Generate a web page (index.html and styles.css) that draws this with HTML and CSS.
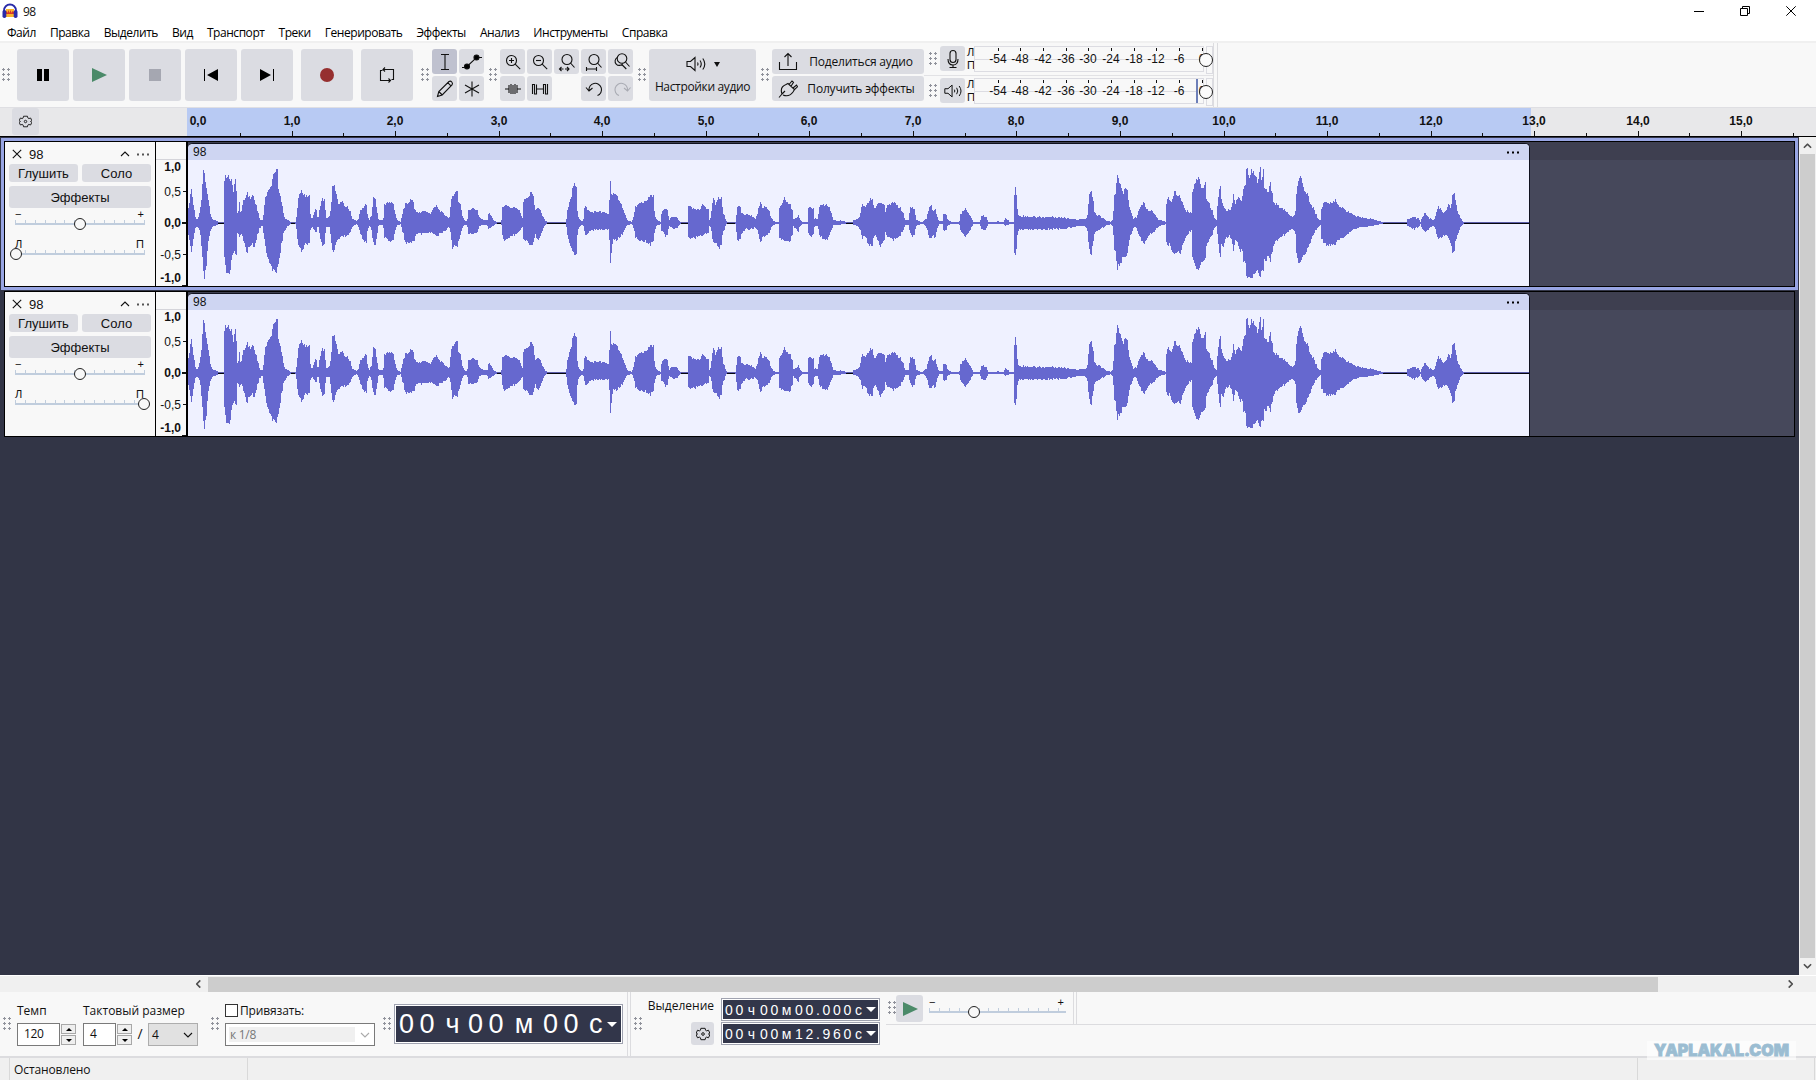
FILE: index.html
```html
<!DOCTYPE html>
<html lang="ru">
<head>
  <meta charset="UTF-8">
  <meta name="viewport" content="width=device-width, initial-scale=1.0">
  <title>98</title>
  <link rel="stylesheet" href="styles.css">
</head>
<body>
  <!-- Shared icons -->
  <svg class="sprite" aria-hidden="true">
    <symbol id="i-gear" viewBox="0 0 16 16"><path d="M5.600 1.500h4.800l.6 2.300 1.100.6 2.200-.7L15.800 7l-1.600 1 1.600 1-1.500 3.300-2.200-.7-1.100.6-.6 2.300H5.600L5 12.200l-1.100-.6-2.200.7L.2 9l1.600-1-1.600-1 1.500-3.300 2.200.7L5 3.800z"/><circle cx="8" cy="8" r="1.500"/></symbol>
    <symbol id="i-lens" viewBox="0 0 20 20"><circle cx="8.500" cy="8.500" r="5"/><path d="M12.200 12.200l5 5"/></symbol>
    <symbol id="i-speaker" viewBox="0 0 22 18"><path d="M2 6.500h3.500L10 2.500v13l-4.500-4H2zM12.500 7.500q1 1.500 0 3M15 5.500q2.500 3.500 0 7M17.800 3.500q4 5.500 0 11"/></symbol>
    <symbol id="i-close" viewBox="0 0 10 10"><path d="M.8.8l8.400 8.400M9.200.8L.8 9.200"/></symbol>
    <symbol id="i-up" viewBox="0 0 10 6"><path d="M1 5l4-4 4 4"/></symbol>
    <symbol id="i-dots" viewBox="0 0 14 3"><path d="M1 .5h2v2H1zM6 .5h2v2H6zM11 .5h2v2h-2z"/></symbol>
  </svg>

  <div class="app">
    <header class="titlebar">
      <svg class="logo" viewBox="0 0 16 16">
        <path d="M4 6h8v8H4z" fill="#f9b52a"/><path d="M3.500 9l1-1 1 2 1-3 1 3 1-3 1 3 1-2 1.500 1v2h-8.500z" fill="#d8352a"/>
        <path d="M2 9V7.500a6 6 0 0 1 12 0V9" fill="none" stroke="#2a2ba8" stroke-width="1.800"/>
        <rect x="0.500" y="7" width="3.800" height="8" rx="1.800" fill="#2a2ba8"/><rect x="11.700" y="7" width="3.800" height="8" rx="1.800" fill="#2a2ba8"/>
      </svg>
      <span class="title">98</span>
      <div class="window-buttons">
        <svg viewBox="0 0 10 10"><path d="M0 5.500h10"/></svg>
        <svg viewBox="0 0 10 10"><path d="M.5 2.500h7v7h-7zM2.500 2.500v-2h7v7h-2"/></svg>
        <svg viewBox="0 0 10 10"><path d="M.3.3l9.400 9.400M9.700.3L.3 9.700"/></svg>
      </div>
    </header>

    <nav class="menu">
      <span>Файл</span><span>Правка</span><span>Выделить</span><span>Вид</span><span>Транспорт</span><span>Треки</span><span>Генерировать</span><span>Эффекты</span><span>Анализ</span><span>Инструменты</span><span>Справка</span>
    </nav>

    <!-- Top toolbars -->
    <div class="toolbar">
      <i class="grip"></i>
      <div class="transport">
        <button><svg viewBox="0 0 16 16"><path d="M2 2h5v12H2zM9 2h5v12H9z"/></svg></button>
        <button><svg viewBox="0 0 16 16"><path d="M1 1l15 7-15 7z" fill="#4b8a69"/></svg></button>
        <button><svg viewBox="0 0 16 16"><path d="M2 2h12v12H2z" fill="#a5a7b1"/></svg></button>
        <button><svg viewBox="0 0 16 16"><path d="M1 2h1v12H1zM15 2v12L4 8z"/></svg></button>
        <button><svg viewBox="0 0 16 16"><path d="M14 2h1v12h-1zM1 2v12l11-6z"/></svg></button>
        <button class="apart"><svg viewBox="0 0 16 16"><circle cx="8" cy="8" r="7" fill="#962f2f"/></svg></button>
        <button class="apart"><svg class="line" viewBox="0 0 16 16"><path d="M4 2.500h10.500v10h-2M12 13.500H1.500v-10h2M6 .5L4 2.500l2 2M9.500 11.500l2 2-2 2"/></svg></button>
      </div>
      <i class="grip"></i>
      <div class="tools">
        <button class="active"><svg class="line" viewBox="0 0 20 20"><path d="M6 2.500h8M6 17.500h8M10 2.500v15"/></svg></button>
        <button><svg class="line" viewBox="0 0 20 20"><path d="M0 15.500h4L14.500 5.500H20"/><circle cx="5" cy="14.500" r="2.500" fill="#000"/><circle cx="14.500" cy="5.500" r="2.500" fill="#000"/></svg></button>
        <button><svg class="line" viewBox="0 0 20 20"><path d="M2.500 17.500l1.300-5L14 2.500q1.500-1 2.800.5t.2 3L7.200 16zM3.800 12.500l3.400 3.500M13 3.800l3.200 3.300"/></svg></button>
        <button><svg class="line" viewBox="0 0 20 20"><path d="M10 2.500v15M3 6l14 8M17 6L3 14"/></svg></button>
      </div>
      <i class="grip"></i>
      <div class="edit">
        <button><svg class="line" viewBox="0 0 20 20"><use href="#i-lens"/><path d="M6 8.500h5M8.500 6v5"/></svg></button>
        <button><svg class="line" viewBox="0 0 20 20"><use href="#i-lens"/><path d="M6 8.500h5"/></svg></button>
        <button><svg class="line" viewBox="0 0 20 20"><circle cx="10" cy="7.500" r="5"/><path d="M13.500 11l4 4.500M2.500 17h4M8 17h4M4.500 15l-2 2 2 2M10 15l2 2-2 2"/></svg></button>
        <button><svg class="line" viewBox="0 0 20 20"><circle cx="10" cy="7.500" r="5"/><path d="M13.500 11l4 4.500M2.500 17h10M2.500 15v4M12.500 15v4"/></svg></button>
        <button><svg class="line" viewBox="0 0 20 20"><circle cx="11" cy="6.500" r="4.800"/><path d="M14.500 10l4 4.500M6.300 5.500a4.200 4.200 0 1 0 5.500 6M10.800 12.500l4.500 4.500"/></svg></button>
        <button><svg class="line" viewBox="0 0 20 20"><path d="M2 10h4M14 10h4M6 6v8M8 5v10M10 6v9M12 5v10M14 6v8"/></svg></button>
        <button><svg class="line" viewBox="0 0 20 20"><path d="M2.500 15V5.500h2V15h2V5.500M6.500 10h7M13.500 15V5.500h2V15h2V5"/></svg></button>
        <span></span>
        <button><svg class="line" viewBox="0 0 20 20"><path d="M5 11.500a6.300 6.300 0 1 1 8.500 5M2 8.500l3 3.500 3.500-3"/></svg></button>
        <button class="dim"><svg class="line" viewBox="0 0 20 20"><path d="M16.500 11.500a6.300 6.300 0 1 0-8.500 5M19.500 8.500l-3 3.500-3.500-3"/></svg></button>
      </div>
      <i class="grip"></i>
      <button class="audio-setup">
        <span><svg class="line" viewBox="0 0 22 18"><use href="#i-speaker"/></svg><b class="caret"></b></span>
        <span class="label">Настройки аудио</span>
      </button>
      <i class="grip"></i>
      <div class="share">
        <button><svg class="line" viewBox="0 0 20 20"><path d="M1.500 10v7.500h17V10M10 14V2M6.500 5L10 1.500 13.500 5"/></svg><span class="label">Поделиться аудио</span></button>
        <button><svg class="line" viewBox="0 0 20 20"><path d="M1 18.500l3-3.500Q1.500 8 8 5.500l2-1 6.500 6-1.500 2.500Q11 18.500 5 16M11 5.500L14 2l1.500 1.300-2.500 4M15 9l3.500-3 1 1.800L16 11M4 15l3-3"/></svg><span class="label">Получить эффекты</span></button>
      </div>
      <div class="meters">
        <div class="meter-row">
          <i class="grip"></i>
          <button><svg class="line" viewBox="0 0 20 20"><rect x="7" y="1.500" width="6" height="12" rx="3"/><path d="M5 10q0 6 5 6t5-6M10 16v3M6.500 18.500h7"/></svg></button>
          <div class="channels"><span>Л</span><span>П</span></div>
          <div class="meter"></div>
        </div>
        <div class="meter-row">
          <i class="grip"></i>
          <button><svg class="line" viewBox="0 0 22 18"><use href="#i-speaker"/></svg></button>
          <div class="channels"><span>Л</span><span>П</span></div>
          <div class="meter playing"></div>
        </div>
      </div>
    </div>

    <!-- Timeline -->
    <div class="timeline">
      <div class="timeline-left"><button><svg class="line" viewBox="0 0 16 16"><use href="#i-gear"/></svg></button></div>
      <div class="ruler" id="ruler"></div>
    </div>

    <!-- Tracks -->
    <main class="workspace">
      <div class="tracks">
        <section class="track selected">
          <div class="panel">
            <div class="panel-head"><svg class="line x" viewBox="0 0 10 10"><use href="#i-close"/></svg><span>98</span><svg class="line up" viewBox="0 0 10 6"><use href="#i-up"/></svg><svg class="dots" viewBox="0 0 14 3"><use href="#i-dots"/></svg></div>
            <div class="panel-row"><button>Глушить</button><button>Соло</button></div>
            <button class="effects">Эффекты</button>
            <div class="slider gain"><span class="ends"><b>−</b><b>+</b></span><div class="rail"><i style="left: 50%"></i></div></div>
            <div class="slider pan"><span class="ends"><b>Л</b><b>П</b></span><div class="rail"><i style="left: 1%"></i></div></div>
          </div>
          <div class="scale"><b>1,0</b><span>0,5</span><b>0,0</b><span>-0,5</span><b>-1,0</b></div>
          <div class="lane">
            <div class="clip">
              <div class="clip-head"><span>98</span><svg viewBox="0 0 14 3"><use href="#i-dots"/></svg></div>
              <svg class="wave" viewBox="0 0 1341 126"></svg>
            </div>
          </div>
        </section>
        <section class="track">
          <div class="panel">
            <div class="panel-head"><svg class="line x" viewBox="0 0 10 10"><use href="#i-close"/></svg><span>98</span><svg class="line up" viewBox="0 0 10 6"><use href="#i-up"/></svg><svg class="dots" viewBox="0 0 14 3"><use href="#i-dots"/></svg></div>
            <div class="panel-row"><button>Глушить</button><button>Соло</button></div>
            <button class="effects">Эффекты</button>
            <div class="slider gain"><span class="ends"><b>−</b><b>+</b></span><div class="rail"><i style="left: 50%"></i></div></div>
            <div class="slider pan"><span class="ends"><b>Л</b><b>П</b></span><div class="rail"><i style="left: 99%"></i></div></div>
          </div>
          <div class="scale"><b>1,0</b><span>0,5</span><b>0,0</b><span>-0,5</span><b>-1,0</b></div>
          <div class="lane">
            <div class="clip">
              <div class="clip-head"><span>98</span><svg viewBox="0 0 14 3"><use href="#i-dots"/></svg></div>
              <svg class="wave" viewBox="0 0 1341 126"></svg>
            </div>
          </div>
        </section>
      </div>
      <div class="vscroll">
        <svg viewBox="0 0 10 6"><use href="#i-up"/></svg>
        <div class="thumb"></div>
        <svg class="down" viewBox="0 0 10 6"><use href="#i-up"/></svg>
      </div>
    </main>
    <div class="hscroll">
      <svg class="left" viewBox="0 0 10 6"><use href="#i-up"/></svg>
      <div class="thumb"></div>
      <svg class="right" viewBox="0 0 10 6"><use href="#i-up"/></svg>
    </div>

    <!-- Bottom toolbars -->
    <footer class="bottom">
      <i class="grip"></i>
      <div class="field tempo">
        <label>Темп</label>
        <div class="inputs"><span class="input">120</span><span class="spin"><i></i><i></i></span></div>
      </div>
      <div class="field signature">
        <label>Тактовый размер</label>
        <div class="inputs"><span class="input">4</span><span class="spin"><i></i><i></i></span><span class="slash">/</span><span class="select">4<svg class="line" viewBox="0 0 10 6"><path d="M1 1l4 4 4-4"/></svg></span></div>
      </div>
      <i class="grip"></i>
      <div class="field snap">
        <label><span class="checkbox"></span>Привязать:</label>
        <div class="combo"><span>к 1/8</span><svg class="line" viewBox="0 0 10 6"><path d="M1 1l4 4 4-4"/></svg></div>
      </div>
      <i class="grip"></i>
      <div class="time big"><span>00</span><em>ч</em><span>00</span><em>м</em><span>00</span><em>с</em><b class="caret"></b></div>
      <div class="divider"></div>
      <i class="grip"></i>
      <div class="selection">
        <label>Выделение</label>
        <button><svg class="line" viewBox="0 0 16 16"><use href="#i-gear"/></svg></button>
      </div>
      <div class="selection-times">
        <div class="time"><span>00</span><em>ч</em><span>00</span><em>м</em><span>00.000</span><em>с</em><b class="caret"></b></div>
        <div class="time"><span>00</span><em>ч</em><span>00</span><em>м</em><span>12.960</span><em>с</em><b class="caret"></b></div>
      </div>
      <div class="speed">
        <div class="speed-bar">
          <i class="grip"></i>
          <button><svg viewBox="0 0 16 16"><path d="M1 1l15 7-15 7z" fill="#4b8a69"/></svg></button>
          <div class="slider"><span class="ends"><b>−</b><b>+</b></span><div class="rail"><i style="left: 33%"></i></div></div>
          <div class="divider"></div>
        </div>
      </div>
    </footer>
    <div class="status"><span class="state">Остановлено</span><span class="rest"></span><span class="tail"></span></div>
    <div class="watermark">YAPLAKAL.COM</div>
  </div>

  <script src="script.js"></script>
</body>
</html>
```
FILE: styles.css
```css
/* General */
* {
  box-sizing: border-box;
}

body {
  margin: 0;
  background: #fff;
  color: #111;
  font-family: "Open Sans", "Noto Sans", sans-serif;
  font-size: 12px;
}

button {
  display: flex;
  align-items: center;
  justify-content: center;
  margin: 0;
  padding: 0;
  border: none;
  border-radius: 3px;
  background: #dbdce2;
  color: #111;
  font: inherit;
}

svg {
  display: block;
  flex: none;
}

.sprite {
  position: absolute;
  width: 0;
  height: 0;
}

.line {
  fill: none;
  stroke: #111;
  stroke-width: 1.1;
}

.app {
  display: flex;
  flex-direction: column;
  width: 1816px;
  height: 1080px;
  overflow: hidden;
}

.grip {
  flex: none;
  width: 8px;
  height: 14px;
  background: radial-gradient(circle at 1.5px 1.5px, #90929b 1.1px, transparent 1.3px) 0 0 / 5px 5px;
}

.caret {
  border: 3px solid transparent;
  border-top: 5px solid #111;
  border-bottom: 0;
}

/* Title and menu */
.titlebar {
  display: flex;
  align-items: center;
  height: 22px;
  padding: 0 20px 0 2px;
}

.logo {
  width: 16px;
  height: 16px;
}

.title {
  margin-left: 5px;
  letter-spacing: -0.7px;
}

.window-buttons {
  display: flex;
  gap: 36px;
  margin-left: auto;
}

.window-buttons svg {
  width: 10px;
  height: 10px;
  fill: none;
  stroke: #000;
}

.menu {
  display: flex;
  gap: 14px;
  height: 21px;
  padding-left: 7px;
  border-bottom: 2px solid #f0f0f0;
  line-height: 21px;
  color: #000;
  letter-spacing: -0.45px;
}

/* Top toolbars */
.toolbar {
  display: flex;
  height: 65px;
  padding: 6px 0 0 2px;
  border-bottom: 1px solid #dfdfe3;
  background: #f8f8f8;
}

.toolbar > .grip {
  margin-top: 19px;
}

.transport {
  display: flex;
  gap: 4px;
  margin: 0 8px 0 7px;
}

.transport button {
  width: 52px;
  height: 52px;
}

.transport .apart {
  margin-left: 4px;
}

.transport svg {
  width: 16px;
  height: 16px;
}

.tools,
.edit {
  display: grid;
  grid-template: 25px 25px / repeat(2, 25px);
  gap: 2px;
  margin: 0 5px 0 3px;
}

.edit {
  grid-template-columns: repeat(5, 25px);
  margin-left: 3px;
}

.tools svg,
.edit svg,
.share svg,
.meter-row button svg {
  width: 20px;
  height: 20px;
}

.tools .active {
  background: #bfc1cf;
}

.dim svg {
  stroke: #a9abb3;
}

.label {
  letter-spacing: -0.35px;
}

.audio-setup {
  flex-direction: column;
  gap: 6px;
  width: 107px;
  height: 52px;
  margin: 0 5px 0 3px;
}

.audio-setup span {
  display: flex;
  align-items: center;
  gap: 7px;
  line-height: 16px;
}

.audio-setup svg {
  width: 22px;
  height: 18px;
}

.share {
  display: grid;
  grid-template-rows: 25px 25px;
  gap: 2px;
  margin-left: 3px;
}

.share button {
  justify-content: flex-start;
  width: 152px;
  padding-left: 6px;
}

.share .label {
  flex: 1;
  text-align: center;
  letter-spacing: -0.2px;
}

.meters {
  width: 290px;
  height: 64px;
  margin-top: -6px;
  border-right: 1px solid #dcdcdf;
  box-shadow: 3px 0 0 #f8f8f8, 4px 0 0 #dcdcdf;
}

.meter-row {
  display: flex;
  align-items: flex-start;
  height: 32px;
  padding: 3px 0 0 5px;
}

.meter-row + .meter-row {
  padding-top: 2px;
  border-top: 1px solid #e2e2e5;
}

.meter-row .grip {
  margin: 6px 3px 0 0;
}

.meter-row button {
  width: 25px;
  height: 25px;
}

.channels {
  display: flex;
  flex-direction: column;
  width: 9px;
  padding-left: 2px;
  font: 11px/13px "Liberation Sans", Arial, sans-serif;
}

.meter {
  position: relative;
  width: 230px;
  height: 26px;
  border: 1px solid #dcdce2;
  background: linear-gradient(#dcdce2, #dcdce2) 0 12px / 100% 1px no-repeat;
  font: 12px/12px "Liberation Sans", Arial, sans-serif;
}

.meter::before {
  content: "";
  position: absolute;
  top: -1px;
  left: 231px;
  width: 5px;
  height: 26px;
  border: 1px solid #dcdce2;
}

.meter::after {
  content: "";
  position: absolute;
  top: 6px;
  left: 224px;
  width: 12px;
  height: 12px;
  border: 1px solid #222;
  border-radius: 50%;
  background: #fbfbfb;
}

/* Level marks, placed by their dB value */
.meter span {
  position: absolute;
  top: 1px;
  width: 24px;
  margin-left: -12px;
  padding-top: 5px;
  background: linear-gradient(#111, #111) 50% 0 / 1px 3px no-repeat;
  text-align: center;
}

.playing {
  box-shadow: inset -5px 0 0 #f8f8f8, inset -7px 0 0 #6d7fb8;
}

/* Timeline */
.timeline {
  display: flex;
  height: 29px;
  border-bottom: 1px solid #000;
  background: #e8e8ea;
}

.timeline-left {
  flex: none;
  width: 187px;
  padding-left: 12px;
}

.timeline-left button {
  width: 27px;
  height: 27px;
}

.timeline-left svg {
  width: 13px;
  height: 13px;
  margin-right: 1px;
  margin-bottom: 1px;
}

.ruler {
  position: relative;
  flex: 1;
  overflow: hidden;
  background: linear-gradient(#b8caf3, #b8caf3) 0 0 / 1344px 100% no-repeat;
  font: bold 12px/26px "Liberation Sans", Arial, sans-serif;
}

.ruler span {
  position: absolute;
  top: 0;
  width: 40px;
  height: 28px;
  margin-left: -20px;
  background: linear-gradient(#111, #111) 50% 100% / 1px 5px no-repeat;
  text-align: center;
}

.ruler .half {
  background-size: 1px 3px;
}

.ruler .first {
  background: none;
}

/* Tracks */
.workspace {
  display: flex;
  height: 838px;
}

.tracks {
  width: 1799px;
  padding: 1px 1px 0;
  background: #323546;
}

.track {
  display: flex;
  height: 146px;
  margin: 1px 3px 0;
  border: 1px solid #000;
  font-family: "Liberation Sans", Arial, sans-serif;
}

.selected {
  margin-top: 3px;
  margin-bottom: 4px;
  box-shadow: 0 0 0 3px #98a5e3;
}

.panel {
  width: 151px;
  padding: 6px 4px 0;
  border-right: 1px solid #000;
  background: #f8f8f8;
}

.panel-head {
  display: flex;
  align-items: center;
  height: 12px;
  margin-bottom: 4px;
  padding-left: 3px;
  font-size: 13px;
}

.panel-head .x {
  width: 10px;
  height: 10px;
  margin-right: 7px;
}

.panel-head .up {
  width: 10px;
  height: 6px;
  margin-left: auto;
  margin-right: 6px;
}

.panel-head .dots {
  width: 14px;
  height: 3px;
  margin-right: 1px;
  fill: #555;
}

.panel button {
  height: 18px;
  padding-top: 1px;
  font-size: 13px;
}

.panel-row {
  display: flex;
  gap: 4px;
}

.panel-row button {
  width: 69px;
}

.panel .effects {
  width: 142px;
  height: 22px;
  margin-top: 4px;
}

.slider {
  width: 130px;
  margin-left: 6px;
}

.ends {
  display: flex;
  justify-content: space-between;
  height: 11px;
  padding: 0 1px 0 0;
  font: 11px/12px "Liberation Sans", Arial, sans-serif;
}

.ends b {
  font-weight: normal;
}

.rail {
  position: relative;
  height: 6px;
  border-bottom: 2px solid #c0cddd;
  background: repeating-linear-gradient(90deg, #c0cddd 0 1px, transparent 1px 9.9px) 0 100% / 100% 3px no-repeat;
}

/* Slider knob rides over the rail */
.rail i {
  position: absolute;
  top: -1px;
  width: 12px;
  height: 12px;
  margin-left: -6px;
  border: 1px solid #222;
  border-radius: 50%;
  background: #f8f8f8;
}

.pan {
  margin-top: 13px;
}

.scale {
  display: flex;
  flex-direction: column;
  align-items: flex-end;
  justify-content: space-between;
  width: 30px;
  padding: 18px 5px 0 0;
  background: linear-gradient(#d5d5da, #d5d5da) 0 17px / 100% 1px no-repeat, linear-gradient(#111, #111) 100% 49px / 3px 1px no-repeat, linear-gradient(#111, #111) 100% 80px / 4px 2px no-repeat, linear-gradient(#111, #111) 100% 112px / 3px 1px no-repeat, linear-gradient(#111, #111) 100% 143px / 4px 1px no-repeat, #f8f8f8;
  font-size: 12px;
  line-height: 15px;
}

.scale span:nth-child(2) {
  margin-top: 2px;
  margin-bottom: 8px;
}

.scale span:nth-child(4) {
  margin-top: 10px;
}

.lane {
  flex: 1;
  padding-top: 1px;
  border-left: 2px solid #000;
  background: linear-gradient(#3e3f50 18px, #46485b 18px);
}

.clip {
  width: 1342px;
  height: 143px;
  overflow: hidden;
  border-top: 1px solid #10121f;
  border-right: 1px solid #10121f;
  border-radius: 5px 5px 0 0;
  background: #eff1ff;
}

.clip-head {
  display: flex;
  align-items: center;
  justify-content: space-between;
  height: 16px;
  padding: 0 8px 0 5px;
  background: #ced5f2;
  font-size: 12px;
}

.clip-head svg {
  width: 16px;
  height: 3px;
}

.wave {
  width: 1341px;
  height: 126px;
  shape-rendering: crispEdges;
}

/* Scrollbars */
.vscroll {
  display: flex;
  flex-direction: column;
  align-items: center;
  gap: 5px;
  width: 17px;
  padding: 6px 0;
  background: #f0f0f0;
}

.vscroll .thumb {
  flex: 1;
  width: 15px;
  background: #cdcdcd;
}

.vscroll svg,
.hscroll svg {
  width: 9px;
  height: 6px;
  fill: none;
  stroke: #505050;
  stroke-width: 1.8;
}

.vscroll .down {
  transform: rotate(180deg);
}

.hscroll {
  display: flex;
  align-items: center;
  height: 17px;
  padding-left: 194px;
  border-top: 1px solid #fff;
  background: #f0f0f0;
}

.hscroll .thumb {
  width: 1450px;
  height: 15px;
  margin-left: 5px;
  background: #cdcdcd;
}

.hscroll .left {
  transform: rotate(-90deg);
}

.hscroll .right {
  margin-left: 128px;
  transform: rotate(90deg);
}

/* Bottom toolbars */
.bottom {
  display: flex;
  height: 66px;
  padding-left: 3px;
  border-bottom: 2px solid #dcdcdf;
  background: #f8f8f8;
}

.bottom > .grip {
  margin-top: 25px;
}

.field label {
  display: flex;
  align-items: center;
  height: 18px;
  margin: 9px 0 4px;
  white-space: nowrap;
}

.tempo {
  width: 66px;
  margin-left: 6px;
}

.signature {
  width: 128px;
}

.inputs {
  display: flex;
}

.input,
.select,
.combo {
  height: 23px;
  border: 1px solid #7a7a7a;
  background: #fff;
  line-height: 20px;
  letter-spacing: -0.3px;
}

.input {
  width: 43px;
  padding-left: 6px;
}

.signature .input {
  width: 33px;
}

.spin {
  display: flex;
  flex-direction: column;
  gap: 1px;
  width: 15px;
  margin: 1px 0 0 1px;
}

.spin i {
  display: flex;
  align-items: center;
  justify-content: center;
  height: 10px;
  border: 1px solid #a8a8a8;
  background: #efefef;
}

.spin i::after {
  content: "";
  border: 3px solid transparent;
  border-bottom-color: #000;
  border-top: 0;
}

.spin i:last-child::after {
  border-top: 3px solid #000;
  border-bottom: 0;
}

.slash {
  width: 16px;
  font-size: 14px;
  line-height: 22px;
  text-align: center;
}

.select {
  display: flex;
  align-items: center;
  justify-content: space-between;
  width: 50px;
  padding: 0 4px 0 3px;
  border-color: #adadad;
  background: #e1e1e1;
}

.bottom .line[viewBox="0 0 10 6"] {
  width: 10px;
  height: 6px;
}

.snap {
  width: 150px;
  margin: 0 8px 0 6px;
}

.snap label {
  letter-spacing: -0.15px;
}

.checkbox {
  width: 13px;
  height: 13px;
  margin-right: 2px;
  border: 1px solid #333;
  background: #fff;
}

.combo {
  display: flex;
  align-items: center;
  justify-content: space-between;
  padding: 0 4px 0 3px;
}

.combo span {
  width: 126px;
  height: 15px;
  padding-left: 1px;
  background: #f0f0f0;
  color: #777;
  line-height: 15px;
}

.combo svg {
  stroke: #aaa;
}

.time {
  display: flex;
  align-items: center;
  width: 159px;
  height: 23px;
  padding-left: 3px;
  border: 1px solid #a0a3b0;
  background: #32364a;
  box-shadow: inset 0 0 0 1px #fff;
  color: #fff;
  font: 14px/20px "Liberation Sans", Arial, sans-serif;
}

.time span {
  letter-spacing: 2.7px;
}

.time em {
  width: 14px;
  padding-right: 3px;
  font-style: normal;
  text-align: center;
}

.time em:nth-of-type(3) {
  width: 9px;
  padding: 0;
}

.time .caret {
  margin-left: 3px;
  border-width: 5px 5px 0;
  border-top-color: #fff;
}

.big {
  width: 229px;
  height: 40px;
  margin: 12px 4px 0 3px;
  padding-left: 4px;
  font-size: 27px;
}

.big span {
  letter-spacing: 5.5px;
}

.big em {
  width: 28px;
}

.big em:nth-of-type(2) {
  width: 34px;
  padding-right: 4px;
}

.big em:nth-of-type(3) {
  width: 23px;
}

.big .caret {
  margin-left: 0;
}

.divider {
  width: 4px;
  height: 64px;
  margin-right: 3px;
  border: solid #dcdcdf;
  border-width: 0 1px;
}

.selection {
  display: flex;
  flex-direction: column;
  align-items: flex-end;
  width: 72px;
  padding-top: 5px;
}

.selection label {
  line-height: 18px;
}

.selection button {
  width: 23px;
  height: 23px;
  margin-top: 7px;
}

.selection svg {
  width: 14px;
  height: 14px;
}

.selection-times {
  display: grid;
  grid-template-rows: 23px 23px;
  gap: 1px;
  margin: 6px 0 0 7px;
}

.speed {
  flex: 1;
  margin-left: 6px;
}

.speed-bar {
  display: flex;
  height: 33px;
  padding: 3px 0 0 2px;
  border-bottom: 1px solid #dcdcdf;
}

.speed .grip {
  margin: 6px 0 0 0;
}

.speed button {
  width: 27px;
  height: 27px;
}

.speed button svg {
  width: 16px;
  height: 16px;
}

.speed .slider {
  width: 137px;
  margin: 1px 0 0 6px;
}

.speed .ends {
  padding: 0 2px 0 0;
}

.speed .divider {
  height: 33px;
  margin: -3px 0 0 7px;
}

/* Status bar */
.status {
  display: flex;
  height: 22px;
  padding-left: 9px;
  background: #f0f0f0;
  line-height: 23px;
}

.state {
  width: 239px;
  padding-left: 4px;
  border: solid #d9d9d9;
  border-width: 0 1px;
  letter-spacing: -0.1px;
}

.rest {
  width: 1390px;
  border-right: 1px solid #d9d9d9;
}

.tail {
  width: 177px;
  border-right: 1px solid #d9d9d9;
}

.watermark {
  position: absolute;
  top: 1041px;
  left: 1647px;
  width: 149px;
  height: 19px;
  background: rgba(255, 255, 255, 0.6);
  color: #9bbdd2;
  font: 900 16px/19px Inter, sans-serif;
  text-align: center;
  white-space: nowrap;
  -webkit-text-stroke: 0.8px #9bbdd2;
}
```
FILE: script.js
```js
const SECOND = 103.55; // pixels per second of audio

// Time ruler
const ruler = document.getElementById('ruler');
for (let i = 0; i <= 31; i++) {
  const mark = document.createElement('span');
  mark.style.left = (i ? Math.round(1 + i * SECOND / 2) : 11) + 'px';
  if (i === 0) mark.className = 'first';
  if (i % 2) mark.className = 'half';
  else mark.textContent = i / 2 + ',0';
  ruler.appendChild(mark);
}

// Meter marks
document.querySelectorAll('.meter').forEach(meter => {
  for (let db = -54; db <= 0; db += 6) {
    const mark = document.createElement('span');
    mark.style.left = Math.round(226.5 + db * 3.775) + 'px';
    mark.textContent = db;
    meter.appendChild(mark);
  }
});

// Peaks as position, up, down, all in thirds of a pixel.
// Each passage starts at its own offset.
const passages = [
  [-24, '24,30,30 28,60,50 34,105,83 38,75,70 42,40,30 48,12,12 54,10,10 58,30,18 63,50,45 66,85,85 69,152,130 73,150,162 78,108,135 82,85,80 86,65,50 92,25,25 98,10,10 112,6,6 114,0,0 131,0,0 132,95,85 135,143,125 138,130,140 144,137,157 150,130,145 155,128,105 160,92,90 166,137,90 169,100,98 171,30,30 174,25,28 178,60,45 182,30,35 186,40,30 190,70,50 196,75,72 202,97,92 206,80,70 212,78,65 218,90,58 222,72,72 228,55,52 234,30,30 240,12,14 247,6,6 252,35,35 256,80,70 262,90,100 268,105,120 274,115,130 280,145,140 286,155,145 292,158,140 296,100,125 302,78,85 306,50,50 312,20,25 320,12,12 332,3,3 333,0,0 345,0,0 349,10,10 354,65,65 358,90,72 364,98,82 370,85,80 376,80,65 388,78,62 390,30,20 397,12,10 403,35,22 408,42,28 412,18,12 416,15,12 420,50,40 426,72,65 432,70,65 436,38,30 440,15,10 450,20,15 454,60,60 457,108,82 464,108,82 468,88,60 474,60,50 480,60,45 486,62,42 494,50,38 502,48,38 510,35,28 518,12,10 530,6,4 536,12,12 540,35,30 546,42,40 552,50,55 559,55,60 562,25,25 568,8,8 574,20,15 577,45,45 580,75,60 587,72,65 592,30,30 596,8,6 610,8,6 613,55,45 620,60,45 626,62,55 634,60,55 641,58,50 645,25,20 652,8,6 662,4,4 668,30,25 672,45,40 678,60,65 684,55,55 690,70,58 700,68,52 703,42,50 710,32,28 720,30,32 730,38,32 740,32,30 750,28,28 758,40,30 770,52,40 774,42,36 785,32,28 800,20,18 808,14,10 814,65,45 816,78,80 824,90,70 832,97,72 836,62,55 842,60,35 847,20,15 855,6,4 862,8,8 865,40,30 874,42,32 884,44,32 893,38,28 897,15,10 905,12,6 915,8,6 924,10,8 926,28,20 932,25,15 940,10,8 950,2,2 951,0,0 964,0,0 966,40,28 972,55,55 980,50,50 990,45,40 1004,45,35 1018,38,25 1028,12,10 1030,65,45 1036,70,52 1044,72,58 1054,95,65 1060,80,60 1066,40,35 1074,45,50 1082,38,40 1090,15,15 1098,5,3 1100,0,0 1158,0,0 1162,35,35 1168,65,60 1174,80,75 1180,115,88 1184,115,95 1189,105,90 1193,25,25 1200,8,8 1210,6,5 1213,45,22 1216,50,40 1222,42,32 1232,32,22 1250,34,20 1270,32,22 1286,28,20 1289,70,50 1292,122,115 1295,85,80 1299,88,50 1310,80,52 1318,70,42 1326,50,35 1334,28,20 1342,8,6 1355,4,3 1362,20,15 1366,50,40 1375,55,52 1385,60,50 1395,65,55 1405,72,60 1411,82,65 1419,80,55 1422,40,30'],
  [1356, '45,18,18 52,8,6 62,4,4 64,25,22 68,35,25 76,45,38 82,38,35 87,12,8 95,15,15 104,18,18 112,14,12 122,3,3 123,0,0 144,0,0 146,50,40 152,52,46 162,40,45 172,40,42 182,40,35 188,58,38 196,50,32 204,40,28 208,10,8 213,15,12 216,55,40 221,75,60 228,55,60 232,70,65 238,76,75 243,75,65 246,45,38 252,22,20 260,4,3 261,0,0 286,0,0 289,20,20 292,48,48 300,48,50 306,28,28 316,24,18 328,26,18 338,18,16 346,12,12 354,35,25 362,66,62 368,42,40 376,52,38 388,35,28 394,15,12 402,5,5 416,3,3 418,48,45 426,52,50 433,75,50 443,60,55 450,55,52 456,40,35 460,12,10 468,14,15 474,22,24 480,10,8 488,3,3 503,2,2 505,48,30 512,50,42 519,42,32 524,12,10 534,12,10 538,45,35 546,57,45 556,55,52 566,52,45 574,30,22 580,10,6 595,5,5 602,8,5 612,5,3 624,0,0 638,0,0 640,8,5 655,12,10 662,30,20 666,55,45 675,50,38 682,55,55 690,70,68 697,72,68 702,45,40 708,48,35 714,60,55 720,62,68 732,52,50 736,30,25 740,48,38 750,55,45 760,62,52 770,55,42 780,45,38 790,30,22 796,8,6 806,8,6 810,45,30 818,48,40 824,42,32 828,10,8 840,4,4 850,4,4 860,15,12 868,45,45 873,50,45 880,35,38 886,42,42 892,18,15 898,5,4 908,5,4 911,28,22 918,26,22 924,8,6 935,4,3 958,4,3 961,25,20 968,35,30 976,45,42 984,32,28 992,20,18 1000,4,3 1020,4,3 1024,20,18 1030,22,20 1038,18,18 1046,3,3 1065,2,2 1072,5,2 1090,3,2 1096,14,8 1104,8,6 1110,3,2 1121,3,2 1123,85,85 1126,108,95 1129,82,78 1132,40,38 1136,22,20 1160,20,20 1200,18,18 1250,18,18 1290,14,14 1310,10,10 1335,12,10 1342,20,18 1345,55,55 1350,95,90 1355,95,92 1360,65,55 1364,30,30 1370,22,22 1380,22,20 1390,14,14 1400,6,6 1414,4,4 1419,12,12 1423,80,82 1428,88,88 1431,142,130'],
  [2676, '112,143,135 118,120,125 124,110,115 130,90,98 136,102,102 142,98,92 146,60,60 152,35,38 160,15,15 170,15,14 176,35,35 184,52,52 192,62,60 200,42,48 208,36,35 216,36,32 224,28,25 234,12,12 244,8,6 257,4,4 260,60,55 264,78,65 270,60,62 276,65,85 284,100,98 290,82,88 300,80,90 308,62,65 316,38,45 326,35,30 335,30,22 337,95,100 344,118,118 350,130,138 358,135,138 364,108,112 372,105,110 376,125,110 380,65,68 388,58,50 396,38,35 405,12,12 410,10,8 414,70,50 420,110,98 424,70,65 430,52,70 438,38,45 450,38,40 456,50,55 460,88,85 466,55,50 474,80,62 482,68,85 488,75,80 491,102,110 498,110,118 500,166,164 508,140,160 514,160,164 520,150,160 528,135,145 534,115,148 540,166,164 544,120,150 549,156,140 554,98,110 560,100,110 566,90,95 571,122,112 576,85,90 582,60,62 592,55,50 602,45,42 612,40,35 622,32,28 630,20,20 640,20,18 646,25,22 649,90,90 655,120,118 662,138,125 668,115,105 676,92,90 684,85,72 690,60,58 700,45,35 708,25,20 716,10,10 722,8,6 725,45,45 732,60,62 745,60,68 756,58,66 766,70,62 775,55,50 790,42,42 805,34,35 815,28,22 830,18,16 850,16,12 870,14,10 890,8,6 905,4,2 914,1,1 915,0,0 980,0,0 982,14,8 990,14,12 1002,18,18 1015,14,14 1021,3,3 1028,20,18 1036,32,28 1044,18,20 1052,12,12 1062,8,8 1068,25,25 1074,50,45 1082,40,45 1090,32,38 1098,35,36 1105,60,45 1112,45,60 1118,85,88 1123,90,80 1128,55,50 1134,28,30 1142,15,12 1149,3,3 1150,0,0 1348,0,0']
];

const peaks = passages.flatMap(([start, points]) =>
  points.split(' ').map(p => {
    const [x, up, down] = p.split(',').map(Number);
    return [(x + start) / 3, up / 3, down / 3];
  }));

// Loudest value that falls inside the pixel column, so sharp peaks survive
function levelAt(x) {
  let i = 1;
  while (i < peaks.length - 1 && peaks[i][0] < x + 0.5) i++;
  const a = peaks[i - 1], b = peaks[i];
  const t = Math.max(0, Math.min(1, (x + 0.5 - a[0]) / (b[0] - a[0])));
  let up = a[1] + (b[1] - a[1]) * t;
  let down = a[2] + (b[2] - a[2]) * t;
  peaks.forEach(p => {
    if (p[0] >= x && p[0] < x + 1) {
      up = Math.max(up, p[1]);
      down = Math.max(down, p[2]);
    }
  });
  return [up, down];
}

// One filled column per pixel, with some roughness on the louder ones
function rough(level, seed) {
  if (level < 4) return Math.round(level);
  const n = Math.sin(seed * 12.9898) * 43758.5453;
  return Math.round(level + (n - Math.floor(n) - 0.5) * Math.min(5, 1.2 + level * 0.08));
}

let d = '';
for (let x = 0; x < 1341; x++) {
  const [up, down] = levelAt(x);
  const top = rough(up, x + 1);
  const bottom = rough(down, x + 5000);
  if (top + bottom > 0) d += `M${x} ${63 - top}h1v${top + bottom}h-1z`;
}
document.querySelectorAll('.wave').forEach(svg => {
  svg.innerHTML = `<path d="M0 62h1341v1H0z" fill="#5c5da8"/><path d="M0 63h1341v1H0z" fill="#05060f"/><path d="${d}" fill="#6668cf"/>`;
});
```
